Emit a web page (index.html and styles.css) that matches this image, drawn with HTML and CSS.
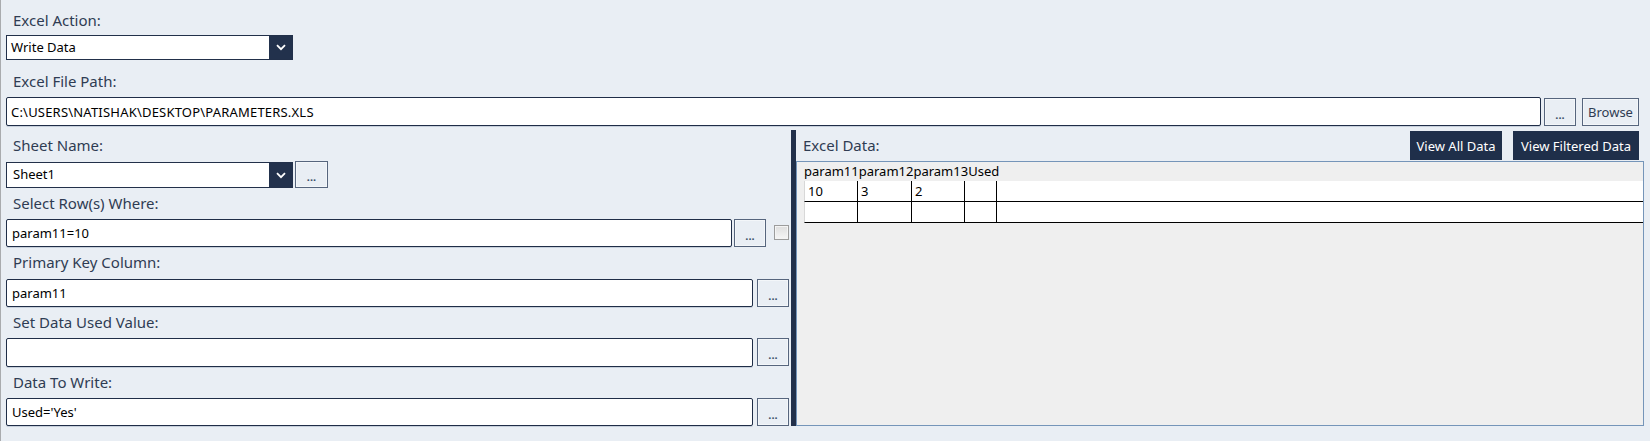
FILE: index.html
```html
<!DOCTYPE html>
<html>
<head>
<meta charset="utf-8">
<link rel="stylesheet" href="styles.css">
</head>
<body>
<div class="page">
  <div class="label l-top">Excel Action:</div>
  <div class="combo combo-action">
    <div class="val">Write Data</div>
    <div class="arrow"><svg width="10" height="7" viewBox="0 0 10 7"><path d="M1 1.2 L5 5.2 L9 1.2" fill="none" stroke="#fff" stroke-width="1.8"/></svg></div>
  </div>
  <div class="label l-path">Excel File Path:</div>
  <div class="path-row">
    <div class="field grow path-text">C:\USERS\NATISHAK\DESKTOP\PARAMETERS.XLS</div>
    <div class="btn dots">...</div>
    <div class="btn browse">Browse</div>
  </div>
  <div class="split">
    <div class="left">
      <div class="label l-sheet">Sheet Name:</div>
      <div class="sheet-row">
        <div class="combo combo-sheet">
          <div class="val">Sheet1</div>
          <div class="arrow"><svg width="10" height="7" viewBox="0 0 10 7"><path d="M1 1.2 L5 5.2 L9 1.2" fill="none" stroke="#fff" stroke-width="1.8"/></svg></div>
        </div>
        <div class="btn dots dots-sheet">...</div>
      </div>
      <div class="label l-sub h31">Select Row(s) Where:</div>
      <div class="frow h28">
        <div class="field w-short">param11=10</div>
        <div class="btn dots dots-near">...</div>
        <div class="check"></div>
      </div>
      <div class="label l-sub h32">Primary Key Column:</div>
      <div class="frow h28">
        <div class="field w-long">param11</div>
        <div class="btn dots">...</div>
      </div>
      <div class="label l-sub h31">Set Data Used Value:</div>
      <div class="frow h29">
        <div class="field w-long"></div>
        <div class="btn dots">...</div>
      </div>
      <div class="label l-sub h31">Data To Write:</div>
      <div class="frow h28">
        <div class="field w-long">Used='Yes'</div>
        <div class="btn dots">...</div>
      </div>
    </div>
    <div class="splitter"></div>
    <div class="right">
      <div class="right-head">
        <div class="label l-data">Excel Data:</div>
        <div class="dark-btn btn-all">View All Data</div>
        <div class="dark-btn btn-filt">View Filtered Data</div>
      </div>
      <div class="box">
        <div class="grid-head">param11param12param13Used</div>
        <div class="grow-row first">
          <div class="cell c1">10</div>
          <div class="cell c2">3</div>
          <div class="cell c3">2</div>
          <div class="cell c4"></div>
          <div class="cell rest"></div>
        </div>
        <div class="grow-row">
          <div class="cell c1"></div>
          <div class="cell c2"></div>
          <div class="cell c3"></div>
          <div class="cell c4"></div>
          <div class="cell rest"></div>
        </div>
      </div>
    </div>
  </div>
</div>
</body>
</html>
```
FILE: styles.css
```css
* { box-sizing: border-box; }
body {
  margin: 0;
  background: #e9eef4;
  font-family: "Segoe UI", "Noto Sans", "Open Sans", sans-serif;
}
.page {
  width: 1650px;
  height: 441px;
  border-left: 1px solid #a9abae;
  padding: 0 6px 0 5px;
}
.label {
  font-size: 15px;
  line-height: 20px;
  color: #2f3c53;
  white-space: nowrap;
}
.l-top { height: 35px; padding-top: 10px; padding-left: 7px; }
.l-path { height: 37px; padding-top: 11px; padding-left: 7px; }
.l-sheet { height: 35px; padding-top: 9px; padding-left: 7px; }
.l-sub { padding-top: 5px; padding-left: 7px; }
.h31 { height: 31px; }
.h32 { height: 32px; }
.h28 { height: 28px; }
.h29 { height: 29px; }

.combo {
  display: flex;
  border: 1px solid #22304a;
  background: #fff;
}
.combo-action { width: 287px; height: 25px; }
.combo-sheet { width: 287px; height: 26px; margin-top: 1px; }
.combo .val {
  flex: 1;
  font-size: 13px;
  line-height: 22px;
  padding-left: 4px;
  color: #000;
}
.combo-sheet .val { padding-left: 6px; line-height: 23px; }
.combo .arrow {
  width: 23px;
  background: #22314c;
  display: flex;
  align-items: center;
  justify-content: center;
}

.path-row {
  display: flex;
  height: 29px;
  padding-right: 5px;
}
.field {
  height: 100%;
  background: #fff;
  border: 1px solid #1f2d47;
  border-radius: 2px;
  box-shadow: 0 1px 0 #c6cfdb;
  font-size: 13px;
  color: #000;
  display: flex;
  align-items: center;
  padding-left: 5px;
  white-space: nowrap;
}
.grow { flex: 1; padding-left: 4px; }
.path-text { letter-spacing: 0.2px; }
.w-short { width: 726px; }
.w-long { width: 747px; }

.btn {
  background: #e9eef4;
  border: 1px solid #56657d;
  box-shadow: inset 0 0 0 1px #f3f6f9;
  font-size: 13px;
  color: #2f3c53;
  display: flex;
  align-items: center;
  justify-content: center;
}
.dots {
  width: 32px;
  height: 28px;
  margin-left: 4px;
  font-size: 11px;
  font-weight: bold;
  color: #3d4e6a;
  padding-top: 4px;
}
.path-row .dots { margin-left: 3px; margin-top: 1px; }
.browse { width: 57px; height: 28px; margin-left: 6px; margin-top: 1px; }
.dots-sheet { width: 33px; height: 27px; margin-left: 2px; }
.dots-near { margin-left: 2px; }

.check {
  width: 15px;
  height: 15px;
  margin-left: 8px;
  margin-top: 6px;
  border: 1px solid #9c9c9c;
  background: linear-gradient(#dedede, #f6f6f6);
  box-shadow: inset 0 0 0 1px #f4f4f4;
}

.split {
  display: flex;
  height: 300px;
}
.left { width: 783px; }
.sheet-row { display: flex; height: 27px; }
.frow { display: flex; }

.splitter {
  width: 5px;
  margin-left: 2px;
  margin-top: 4px;
  background: #22304a;
}
.right {
  flex: 1;
  display: flex;
  flex-direction: column;
}
.right-head {
  height: 35px;
  display: flex;
  padding: 0 5px 0 7px;
}
.l-data { padding-top: 9px; flex: 1; }
.dark-btn {
  height: 29px;
  margin-top: 5px;
  background: #1f2f4a;
  color: #fff;
  font-size: 13px;
  display: flex;
  align-items: center;
  justify-content: center;
  white-space: nowrap;
}
.btn-all { width: 92px; }
.btn-filt { width: 126px; margin-left: 11px; }

.box {
  height: 265px;
  border: 1px solid #7595b9;
  background: #efefef;
}
.grid-head {
  height: 19px;
  padding-left: 7px;
  font-size: 13px;
  line-height: 19px;
  color: #000;
  white-space: nowrap;
}
.grow-row {
  display: flex;
  margin-left: 7px;
  height: 21px;
  background: #fff;
  border-bottom: 1px solid #000;
  border-left: 1px solid #d8d8d8;
}
.grow-row.first { border-top: 0; }
.cell {
  height: 20px;
  font-size: 13px;
  line-height: 20px;
  padding-left: 3px;
  color: #000;
  border-right: 1px solid #000;
}
.c1 { width: 53px; }
.c2 { width: 54px; }
.c3 { width: 53px; }
.c4 { width: 32px; }
.rest { flex: 1; border-right: 0; }
```
